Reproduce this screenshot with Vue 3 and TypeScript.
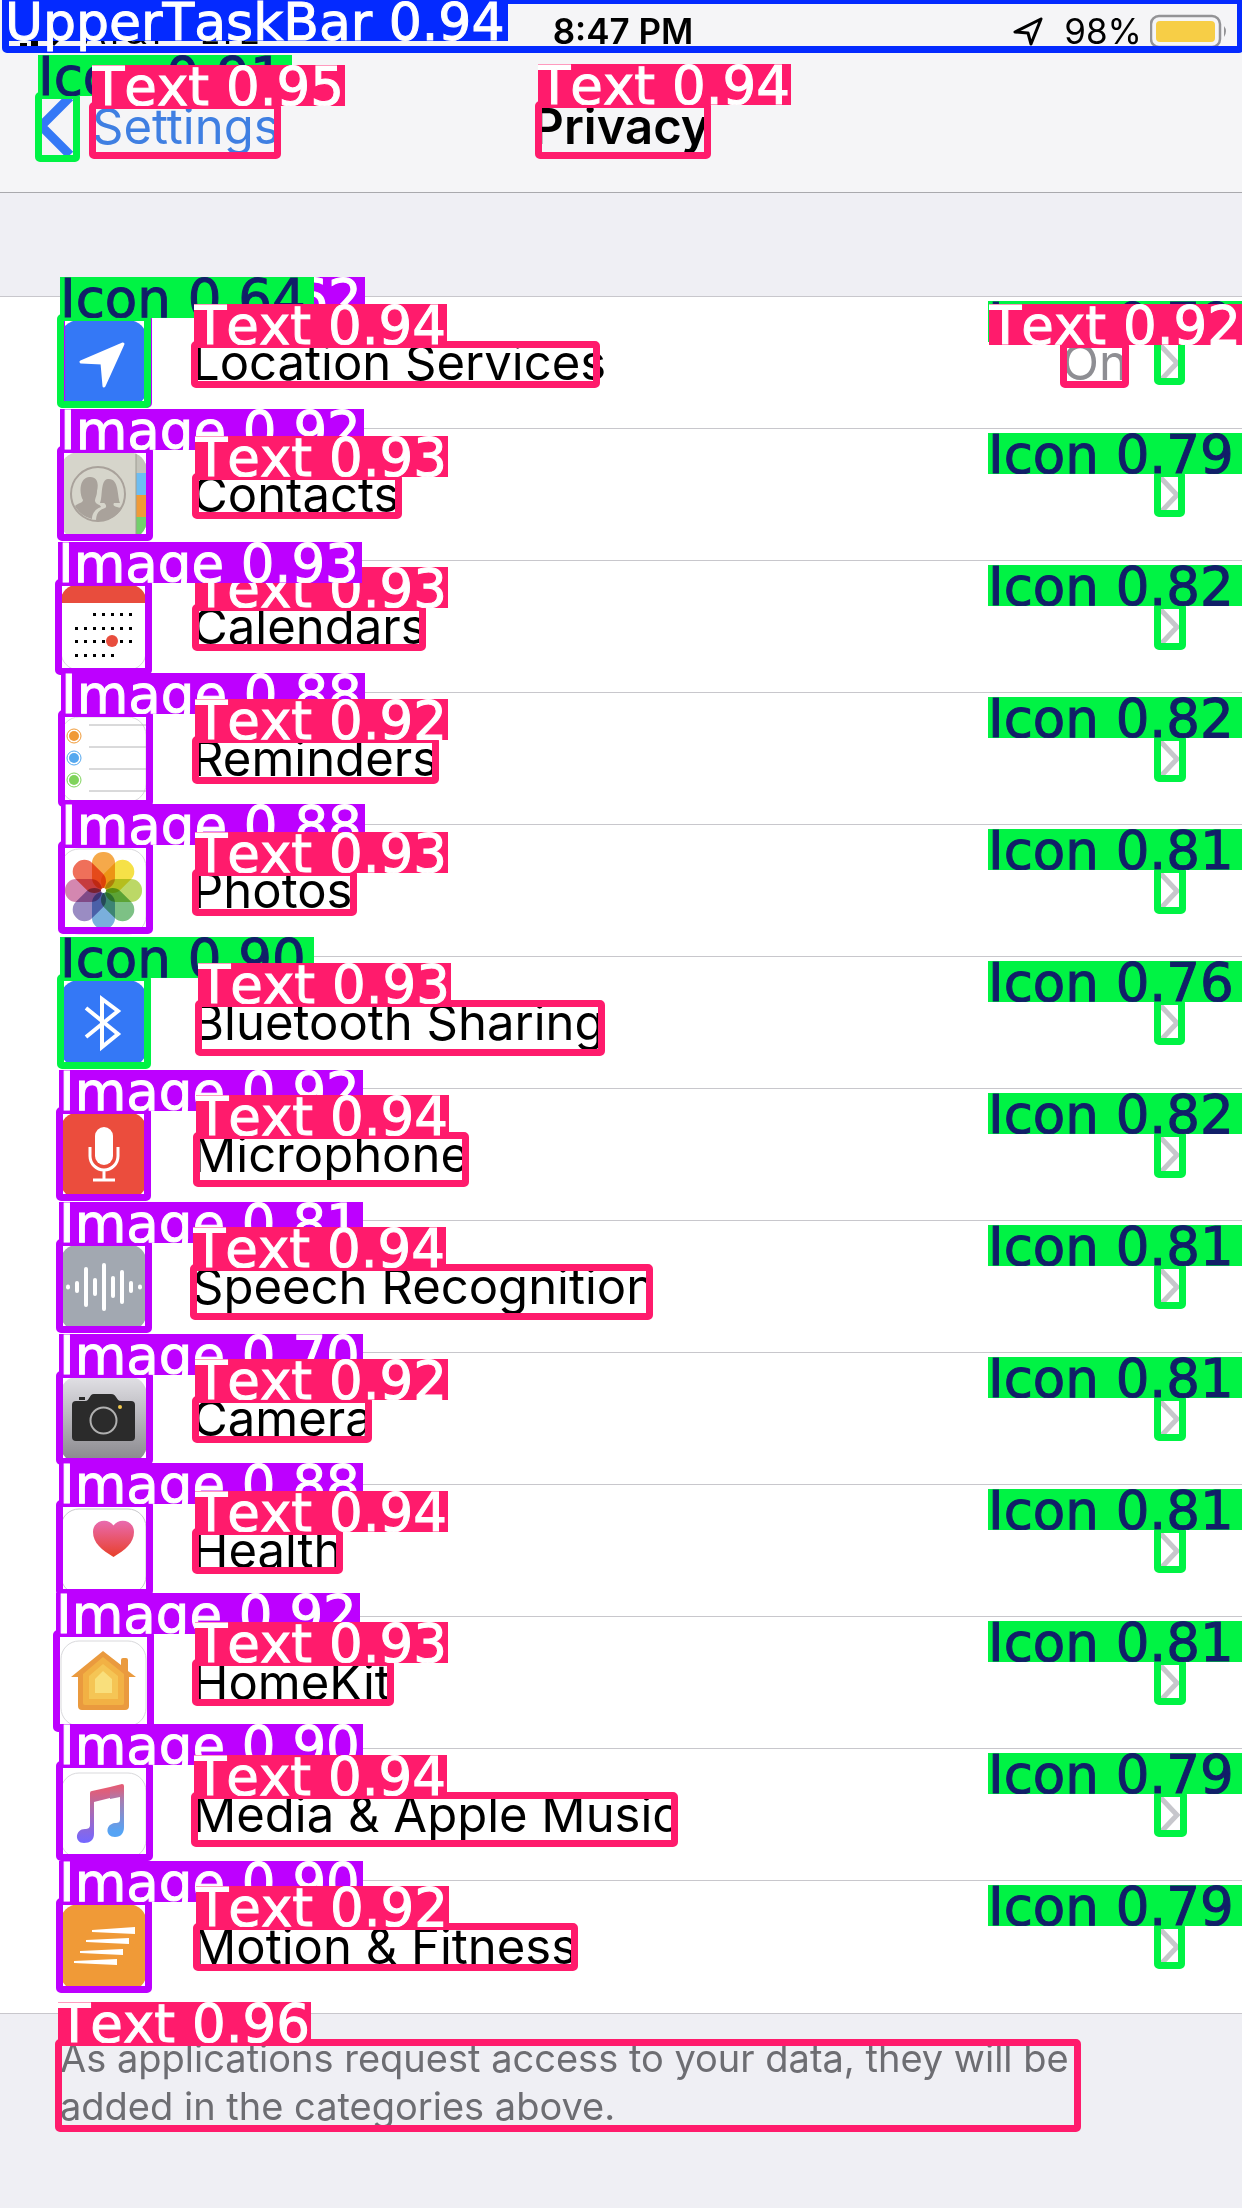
<script setup lang="ts">
type Kind = 'bar' | 'icon' | 'text' | 'image'

interface Row {
  id: string
  label: string
  value?: string
}

interface Mark {
  kind: Kind
  score: string
  x: number
  y: number
  w: number
  h: number
  /** Marks with side "right" measure x from the right edge of the page. */
  side?: 'right'
}

const rows: Row[] = [
  { id: 'location', label: 'Location Services', value: 'On' },
  { id: 'contacts', label: 'Contacts' },
  { id: 'calendars', label: 'Calendars' },
  { id: 'reminders', label: 'Reminders' },
  { id: 'photos', label: 'Photos' },
  { id: 'bluetooth', label: 'Bluetooth Sharing' },
  { id: 'microphone', label: 'Microphone' },
  { id: 'speech', label: 'Speech Recognition' },
  { id: 'camera', label: 'Camera' },
  { id: 'health', label: 'Health' },
  { id: 'homekit', label: 'HomeKit' },
  { id: 'music', label: 'Media & Apple Music' },
  { id: 'motion', label: 'Motion & Fitness' },
]

const kindNames: Record<Kind, string> = {
  bar: 'UpperTaskBar',
  icon: 'Icon',
  text: 'Text',
  image: 'Image',
}

const marks: Mark[] = [
  { kind: 'icon', score: '0.91', x: 35, y: 92, w: 45, h: 70 },
  { kind: 'text', score: '0.95', x: 89, y: 102, w: 192, h: 57 },
  { kind: 'text', score: '0.94', x: 535, y: 101, w: 176, h: 58 },
  { kind: 'image', score: '0.62', x: 58, y: 314, w: 94, h: 94 },
  { kind: 'icon', score: '0.64', x: 57, y: 314, w: 94, h: 94 },
  { kind: 'text', score: '0.94', x: 191, y: 341, w: 409, h: 47 },
  { kind: 'icon', score: '0.79', x: 57, y: 338, w: 31, h: 47, side: 'right' },
  { kind: 'text', score: '0.92', x: 113, y: 341, w: 69, h: 47, side: 'right' },
  { kind: 'image', score: '0.92', x: 57, y: 446, w: 96, h: 95 },
  { kind: 'text', score: '0.93', x: 192, y: 473, w: 210, h: 46 },
  { kind: 'icon', score: '0.79', x: 57, y: 470, w: 31, h: 47, side: 'right' },
  { kind: 'text', score: '0.93', x: 192, y: 604, w: 234, h: 47 },
  { kind: 'image', score: '0.93', x: 55, y: 579, w: 97, h: 96 },
  { kind: 'icon', score: '0.82', x: 56, y: 602, w: 32, h: 48, side: 'right' },
  { kind: 'image', score: '0.88', x: 58, y: 710, w: 95, h: 97 },
  { kind: 'text', score: '0.92', x: 192, y: 736, w: 247, h: 48 },
  { kind: 'icon', score: '0.82', x: 56, y: 734, w: 32, h: 48, side: 'right' },
  { kind: 'image', score: '0.88', x: 58, y: 841, w: 95, h: 93 },
  { kind: 'text', score: '0.93', x: 192, y: 869, w: 165, h: 47 },
  { kind: 'icon', score: '0.81', x: 56, y: 866, w: 32, h: 48, side: 'right' },
  { kind: 'icon', score: '0.90', x: 57, y: 974, w: 94, h: 95 },
  { kind: 'text', score: '0.93', x: 195, y: 1000, w: 410, h: 56 },
  { kind: 'icon', score: '0.76', x: 57, y: 998, w: 31, h: 47, side: 'right' },
  { kind: 'image', score: '0.92', x: 56, y: 1107, w: 95, h: 94 },
  { kind: 'text', score: '0.94', x: 193, y: 1132, w: 276, h: 55 },
  { kind: 'icon', score: '0.82', x: 56, y: 1130, w: 32, h: 48, side: 'right' },
  { kind: 'image', score: '0.81', x: 56, y: 1239, w: 96, h: 94 },
  { kind: 'text', score: '0.94', x: 190, y: 1264, w: 463, h: 56 },
  { kind: 'icon', score: '0.81', x: 56, y: 1262, w: 32, h: 47, side: 'right' },
  { kind: 'image', score: '0.70', x: 56, y: 1371, w: 97, h: 94 },
  { kind: 'text', score: '0.92', x: 192, y: 1396, w: 180, h: 47 },
  { kind: 'icon', score: '0.81', x: 56, y: 1394, w: 32, h: 47, side: 'right' },
  { kind: 'image', score: '0.88', x: 56, y: 1500, w: 97, h: 96 },
  { kind: 'text', score: '0.94', x: 192, y: 1528, w: 151, h: 46 },
  { kind: 'icon', score: '0.81', x: 56, y: 1526, w: 32, h: 47, side: 'right' },
  { kind: 'image', score: '0.92', x: 53, y: 1630, w: 101, h: 102 },
  { kind: 'text', score: '0.93', x: 192, y: 1659, w: 202, h: 47 },
  { kind: 'icon', score: '0.81', x: 56, y: 1658, w: 32, h: 47, side: 'right' },
  { kind: 'image', score: '0.90', x: 56, y: 1761, w: 97, h: 100 },
  { kind: 'text', score: '0.94', x: 191, y: 1792, w: 487, h: 55 },
  { kind: 'icon', score: '0.79', x: 55, y: 1790, w: 33, h: 47, side: 'right' },
  { kind: 'image', score: '0.90', x: 56, y: 1898, w: 96, h: 95 },
  { kind: 'text', score: '0.92', x: 193, y: 1923, w: 385, h: 48 },
  { kind: 'icon', score: '0.79', x: 57, y: 1922, w: 31, h: 47, side: 'right' },
  { kind: 'text', score: '0.96', x: 55, y: 2039, w: 1026, h: 93 },
]

const px = (n: number): string => `${n}px`

function boxStyle(m: Mark): Record<string, string> {
  return { [m.side ?? 'left']: px(m.x), top: px(m.y), width: px(m.w), height: px(m.h) }
}

// A tag sits on the top edge of its box; on the right side it ends at the page edge.
function tagStyle(m: Mark): Record<string, string> {
  return m.side ? { right: px(0), top: px(m.y - 37) } : { left: px(m.x + 3), top: px(m.y - 37) }
}

const petals = ['#f4a036', '#f5de33', '#b5d455', '#6fba78', '#6ba6d8', '#8f7fbd', '#d07aa8', '#ee6048']

const dotRows = [
  { y: 30, from: 2, to: 6 },
  { y: 44, from: 0, to: 6 },
  { y: 57, from: 0, to: 6 },
  { y: 71, from: 0, to: 4 },
]
const dots = dotRows.flatMap((r) =>
  Array.from({ length: r.to - r.from + 1 }, (_, i) => ({ x: 15 + (r.from + i) * 9, y: r.y - 1 })),
)

const wave = [5, 12, 40, 18, 48, 22, 34, 12, 5].map((h, i) => ({ x: 8 + i * 9, h }))
</script>

<template>
  <div class="page">
    <header class="top">
      <div class="status">
        <div class="carrier">
          <svg width="50" height="36" viewBox="0 0 50 36" aria-hidden="true">
            <path d="M2 30h7v3H2zM13 28h7v5h-7z" />
            <path d="M36 33l-8-8a12 12 0 0 1 16 0z" />
          </svg>
          <span>AT&amp;T</span>
          <span class="net">LTE</span>
        </div>
        <time class="clock">8:47 PM</time>
        <div class="power">
          <svg width="32" height="32" viewBox="0 0 32 32" aria-hidden="true">
            <path d="M29 4L3 17l13 1 3 11z" fill="none" stroke="#000" stroke-width="3" stroke-linejoin="round" />
          </svg>
          <span>98%</span>
          <svg width="78" height="34" viewBox="0 0 78 34" aria-hidden="true">
            <rect x="1" y="2" width="69" height="31" rx="8" fill="none" stroke="#939396" stroke-width="2.5" />
            <rect x="6" y="7" width="59" height="21" rx="4" fill="#f7ce46" />
            <path d="M74 12q4 5 0 11z" fill="#939396" />
          </svg>
        </div>
      </div>
      <nav class="nav">
        <a class="back" href="#settings">
          <svg width="38" height="64" viewBox="0 0 38 64" aria-hidden="true">
            <path d="M34 3L5 32l29 29" fill="none" stroke="#3478f6" stroke-width="9" />
          </svg>
          <span>Settings</span>
        </a>
        <h1>Privacy</h1>
      </nav>
    </header>

    <main>
      <ul class="list">
        <li v-for="row in rows" :key="row.id">
          <a class="row" :href="`#${row.id}`">
            <svg class="glyph" viewBox="0 0 87 87" aria-hidden="true">
              <g v-if="row.id === 'location'">
                <rect width="87" height="87" rx="19" fill="#3478f6" />
                <path d="M63 24L21 42l21 1 2 23z" fill="#fff" stroke="#fff" stroke-width="3" stroke-linejoin="round" />
              </g>
              <g v-else-if="row.id === 'contacts'">
                <clipPath id="contacts-clip"><rect width="87" height="87" rx="19" /></clipPath>
                <g clip-path="url(#contacts-clip)">
                  <rect width="87" height="87" fill="#d6d5cb" />
                  <path d="M76 0h11v21H76z" fill="#c4c3ba" />
                  <path d="M76 21h11v22H76z" fill="#6dbdf2" />
                  <path d="M76 43h11v22H76z" fill="#f09a37" />
                  <path d="M76 65h11v22H76z" fill="#72cf6b" />
                  <path d="M76 0v87" stroke="#9d9c92" stroke-width="1" />
                </g>
                <circle cx="38" cy="42" r="27" fill="none" stroke="#a9a29b" stroke-width="2" />
                <path
                  d="M15 54c3-3 8-3 8-6-4-6-4-22 6-23 8-1 10 6 8 14 0 5-2 7-2 10 1 4 5 3 6 6-6 2-9 7-9 12a26 26 0 0 1-17-13z"
                  fill="#a9a29b"
                />
                <path
                  d="M36 69c0-8 3-11 9-13 2-1 1-4-1-5h-4c3-6 0-23 8-24 11-1 9 16 12 24h-6c-2 3 2 4 8 5a27 27 0 0 1-26 13z"
                  fill="#a9a29b"
                />
              </g>
              <g v-else-if="row.id === 'calendars'">
                <rect x="1" y="1" width="85" height="85" rx="18" fill="#fff" stroke="#d9d9dc" />
                <path d="M0 19v0a19 19 0 0 1 19-19h49a19 19 0 0 1 19 19z" fill="#e84d3d" />
                <rect v-for="(d, i) in dots" :key="i" :x="d.x" :y="d.y" width="3" height="3" />
                <circle cx="52" cy="57" r="6" fill="#e84d3d" />
              </g>
              <g v-else-if="row.id === 'reminders'">
                <rect x="1" y="1" width="85" height="85" rx="18" fill="#fff" stroke="#d9d9dc" />
                <path d="M29 9h57M29 31h57M29 53h57M29 75h57" stroke="#b4b4b6" />
                <circle cx="14" cy="20" r="5" fill="#f09a37" />
                <circle cx="14" cy="20" r="7" fill="none" stroke="#f09a37" />
                <circle cx="14" cy="42" r="5" fill="#55a8ef" />
                <circle cx="14" cy="42" r="7" fill="none" stroke="#55a8ef" />
                <circle cx="14" cy="64" r="5" fill="#7fd35b" />
                <circle cx="14" cy="64" r="7" fill="none" stroke="#7fd35b" />
              </g>
              <g v-else-if="row.id === 'photos'">
                <rect x="1" y="1" width="85" height="85" rx="18" fill="#fff" stroke="#d9d9dc" />
                <rect
                  v-for="(c, i) in petals"
                  :key="c"
                  class="petal"
                  x="32"
                  y="4"
                  width="23"
                  height="37"
                  rx="11"
                  :fill="c"
                  :transform="`rotate(${i * 45} 43.5 42.5)`"
                />
                <circle cx="43.5" cy="42.5" r="2.5" fill="#fff" />
              </g>
              <g v-else-if="row.id === 'bluetooth'">
                <rect width="87" height="87" rx="19" fill="#3478f6" />
                <path d="M26 28l32 26-16 13V19l16 12-32 26" fill="none" stroke="#fff" stroke-width="4" />
              </g>
              <g v-else-if="row.id === 'microphone'">
                <rect width="87" height="87" rx="19" fill="#eb4d3d" />
                <rect x="35" y="15" width="18" height="38" rx="9" fill="#fff" />
                <path d="M30 35v9a14 14 0 0 0 28 0v-9M44 58v10M33 68h22" fill="none" stroke="#fff" stroke-width="3" />
              </g>
              <g v-else-if="row.id === 'speech'">
                <rect width="87" height="87" rx="19" fill="#a2a8b1" />
                <rect
                  v-for="b in wave"
                  :key="b.x"
                  :x="b.x - 2"
                  :y="43 - b.h / 2"
                  width="4"
                  :height="b.h"
                  rx="2"
                  fill="#fff"
                />
              </g>
              <g v-else-if="row.id === 'camera'">
                <linearGradient id="camera-fill" x1="0" y1="0" x2="0" y2="1">
                  <stop offset="0" stop-color="#e2e1e6" />
                  <stop offset="1" stop-color="#87868b" />
                </linearGradient>
                <rect width="87" height="87" rx="19" fill="url(#camera-fill)" />
                <path
                  d="M16 25h9c5 0 4-7 9-7h17c6 0 5 7 10 7h10a4 4 0 0 1 4 4v32a4 4 0 0 1-4 4H16a4 4 0 0 1-4-4V29a4 4 0 0 1 4-4z"
                  fill="#2b2b2b"
                />
                <path d="M19 21h6v3h-6z" fill="#2b2b2b" />
                <circle cx="43.5" cy="44.5" r="13" fill="none" stroke="#b0b0b0" stroke-width="2" />
                <circle cx="60" cy="31" r="2" fill="#f3c94c" />
              </g>
              <g v-else-if="row.id === 'health'">
                <linearGradient id="health-fill" x1="0" y1="0" x2="0" y2="1">
                  <stop offset="0" stop-color="#e96bb0" />
                  <stop offset="1" stop-color="#e8402a" />
                </linearGradient>
                <rect x="1" y="1" width="85" height="85" rx="18" fill="#fff" stroke="#c9c9cc" />
                <path
                  d="M53.5 49C42 42 33 35 33 24c0-12 15-15 20.500-6.500C59 9 74 12 74 24c0 11-9 18-20.500 25z"
                  fill="url(#health-fill)"
                />
              </g>
              <g v-else-if="row.id === 'homekit'">
                <rect x="1" y="1" width="85" height="85" rx="18" fill="#fff" stroke="#d9d9dc" />
                <path
                  d="M43 11l18 14v-5a2 2 0 0 1 2-2h3a2 2 0 0 1 2 2v11l8 6h-7v29a4 4 0 0 1-4 4H22a4 4 0 0 1-4-4V37h-7z"
                  fill="#ea9a3e"
                />
                <path d="M43 17l21 17v29a2 2 0 0 1-2 2H25a2 2 0 0 1-2-2V34z" fill="#f2b144" />
                <path d="M43 24l15 12v23H29V36z" fill="#f5c555" />
                <path d="M43 31l9 8v14H35V39z" fill="#f9df7c" />
              </g>
              <g v-else-if="row.id === 'music'">
                <linearGradient id="music-fill" gradientUnits="userSpaceOnUse" x1="46" y1="14" x2="46" y2="70">
                  <stop offset="0" stop-color="#ee5a6c" />
                  <stop offset="0.35" stop-color="#b46ba5" />
                  <stop offset="1" stop-color="#7567ff" />
                </linearGradient>
                <linearGradient id="music-fill-right" gradientUnits="userSpaceOnUse" x1="60" y1="14" x2="60" y2="60">
                  <stop offset="0" stop-color="#e45c76" />
                  <stop offset="0.3" stop-color="#a87db0" />
                  <stop offset="1" stop-color="#55a4f5" />
                </linearGradient>
                <rect x="1" y="1" width="85" height="85" rx="18" fill="#fff" stroke="#d9d9dc" />
                <path d="M34 30v32c0 6-4 9-10 9-10 0-9-14 1-14 3 0 5-1 5-4V21q0-2 2-2l18-4v11z" fill="url(#music-fill)" />
                <path d="M50 15l12-3q2 0 2 2v41c0 6-3 10-9 10-10 0-10-13 0-14 4 0 5-1 5-4V25l-10 2z" fill="url(#music-fill-right)" />
              </g>
              <g v-else>
                <rect width="87" height="87" rx="19" fill="#f09a37" />
                <path
                  d="M32 26l43-3v7l-43-2zM26 36l43-2v6l-43-2zM20 47l43-2v6l-43-2zM14 57l43-2v6l-43-2z"
                  fill="#fff"
                />
              </g>
            </svg>
            <span class="cell">
              <span class="label">{{ row.label }}</span>
              <span v-if="row.value" class="value">{{ row.value }}</span>
              <svg class="chevron" width="24" height="40" viewBox="0 0 24 40" aria-hidden="true">
                <path d="M2 2l17 18L2 38" fill="none" stroke="#c7c7cc" stroke-width="5" />
              </svg>
            </span>
          </a>
        </li>
      </ul>
      <p class="note">As applications request access to your data, they will be added in the categories above.</p>
    </main>

    <div class="marks">
      <div class="box bar bar-box"></div>
      <div class="tag bar bar-tag">{{ kindNames.bar }} 0.94</div>
      <template v-for="(m, i) in marks" :key="i">
        <div class="box" :class="m.kind" :style="boxStyle(m)"></div>
        <div class="tag" :class="m.kind" :style="tagStyle(m)">{{ kindNames[m.kind] }} {{ m.score }}</div>
      </template>
    </div>
  </div>
</template>

<style>
body {
  margin: 0;
  background: #efeff4;
}
</style>

<style scoped>
.page {
  position: relative;
  box-sizing: border-box;
  min-height: 100vh;
  overflow: hidden;
  background: #efeff4;
  color: #000;
  font-family: Inter, 'Liberation Sans', sans-serif;
}

.top {
  background: #f5f5f7;
  border-bottom: 1px solid #a9a9ad;
}

.status {
  display: grid;
  grid-template-columns: 1fr auto 1fr;
  align-items: center;
  box-sizing: border-box;
  height: 60px;
  padding: 2px 14px 0 18px;
  font-size: 35px;
  line-height: 40px;
}

.carrier,
.power {
  display: flex;
  align-items: center;
}

.carrier {
  gap: 14px;
}

.net {
  margin-left: 18px;
}

.clock {
  font-weight: 600;
}

.power {
  justify-content: flex-end;
  gap: 8px;
}

.power span {
  margin-left: 12px;
}

.nav {
  display: grid;
  grid-template-columns: 1fr auto 1fr;
  align-items: center;
  height: 132px;
  padding: 0 36px;
}

.back {
  display: flex;
  align-items: center;
  gap: 18px;
  color: #3f7fe2;
  font-size: 49px;
  text-decoration: none;
}

h1 {
  margin: 0;
  font-size: 49px;
  font-weight: 600;
}

.list {
  margin: 103px 0 0;
  padding: 0;
  border-top: 1px solid #c8c7cc;
  border-bottom: 1px solid #c8c7cc;
  background: #fff;
  list-style: none;
}

.row {
  display: flex;
  align-items: center;
  gap: 45px;
  height: 132px;
  padding-left: 60px;
  color: inherit;
  font-size: 49px;
  text-decoration: none;
}

.glyph {
  flex: none;
  width: 87px;
  height: 87px;
}

.petal {
  mix-blend-mode: multiply;
  opacity: 0.9;
}

.cell {
  display: flex;
  flex: 1;
  align-items: center;
  box-sizing: border-box;
  height: 132px;
  padding-right: 60px;
  border-bottom: 1px solid #c8c7cc;
}

li:last-child .cell {
  border-bottom-color: transparent;
}

.label {
  flex: 1;
}

.value {
  margin-right: 30px;
  color: #8e8e93;
}

.note {
  max-width: 1060px;
  margin: 0;
  padding: 20px 60px 60px;
  color: #6d6d72;
  font-size: 38px;
  line-height: 48px;
}

.marks {
  position: absolute;
  inset: 0;
  overflow: hidden;
  pointer-events: none;
}

.box {
  position: absolute;
  box-sizing: border-box;
  border: 7px solid var(--tone);
  border-radius: 5px;
}

.tag {
  position: absolute;
  box-sizing: border-box;
  height: 41px;
  overflow: hidden;
  background: var(--tone);
  color: #fff;
  font-family: 'DejaVu Sans', sans-serif;
  font-size: 53px;
  font-kerning: none;
  line-height: 44px;
  white-space: nowrap;
  -webkit-text-stroke: 1px currentColor;
}

.bar {
  --tone: #042aff;
}

.icon {
  --tone: #00f344;
}

.text {
  --tone: #ff1b6c;
}

.image {
  --tone: #bd00ff;
}

.tag.icon {
  width: 254px;
  color: #111f68;
}

.tag.text {
  width: 253px;
}

.tag.image {
  width: 304px;
}

.bar-box {
  top: -3px;
  right: -2px;
  left: 2px;
  height: 56px;
}

.bar-tag {
  top: 0;
  left: 2px;
  width: 506px;
  padding-left: 3px;
  overflow: visible;
  font-size: 52px;
}
</style>
